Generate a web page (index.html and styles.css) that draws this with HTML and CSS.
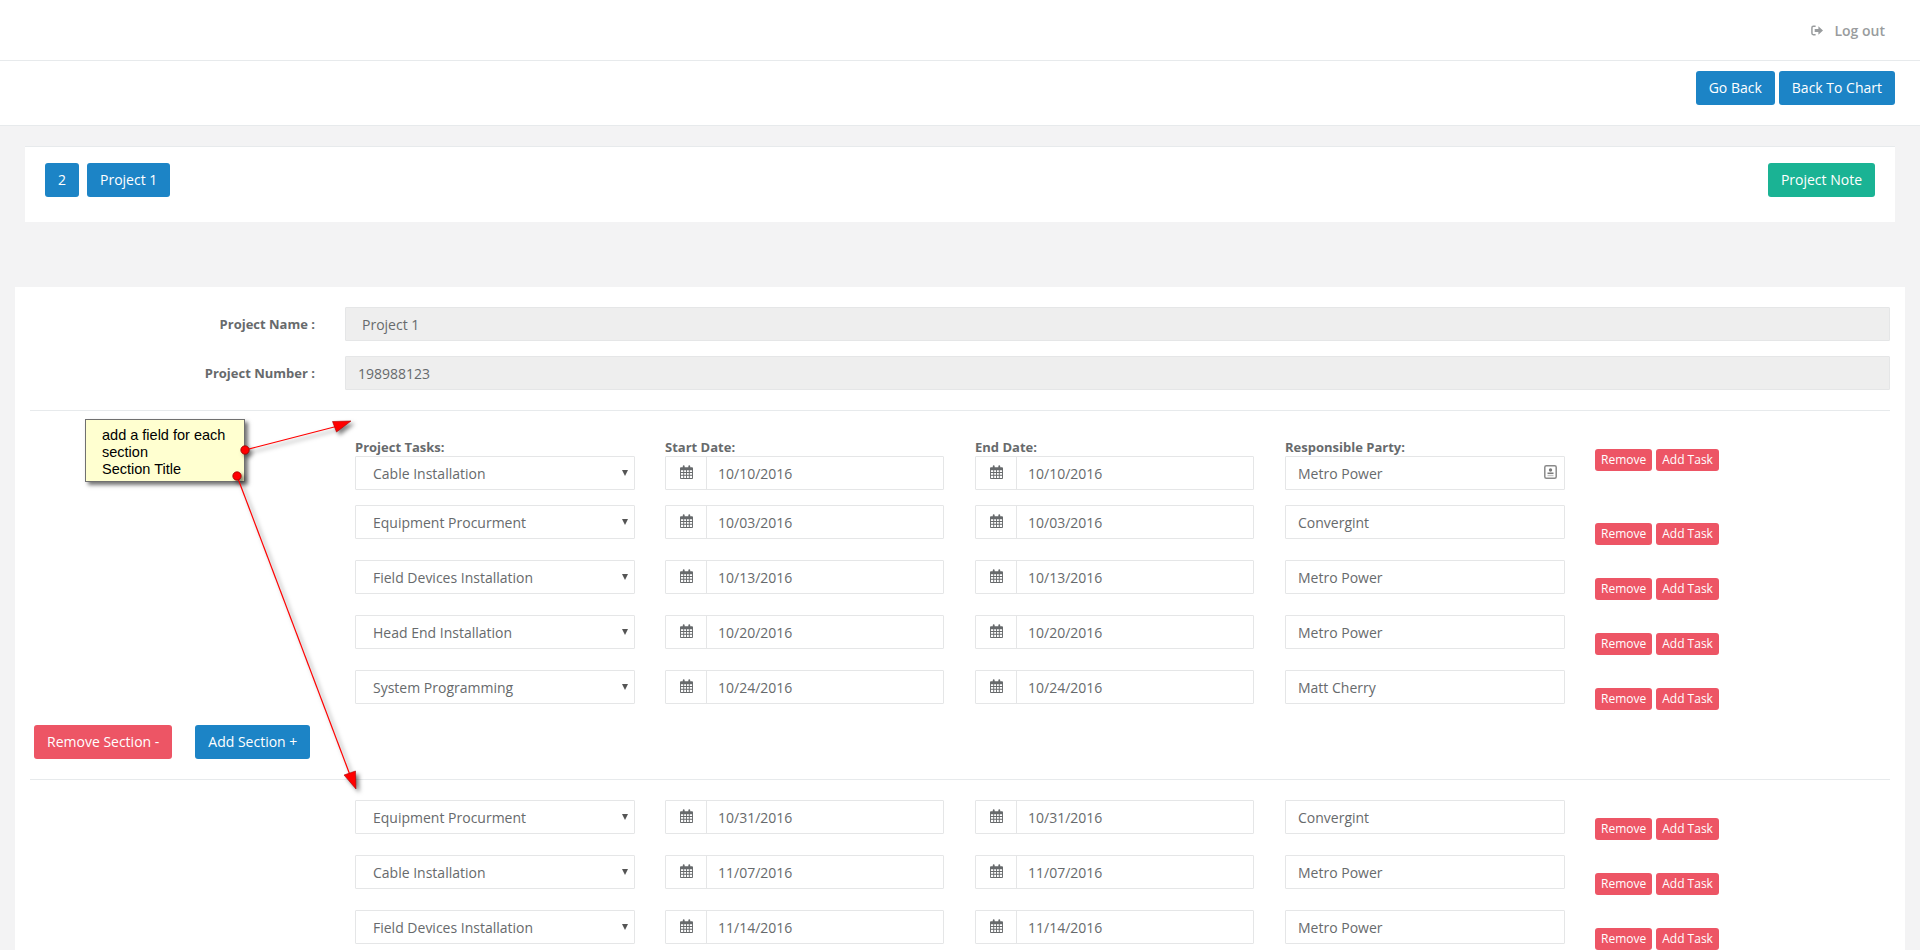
FILE: index.html
```html
<!DOCTYPE html>
<html lang="en">
<head>
<meta charset="utf-8">
<title>Project 1</title>
<link rel="stylesheet" href="styles.css">
</head>
<body>
<svg class="defs" aria-hidden="true">
  <symbol id="cal" viewBox="0 0 14 15">
    <path fill-rule="evenodd" d="M1 2.500h2V1.200a1 1 0 0 1 2 0v1.300h4V1.200a1 1 0 0 1 2 0v1.300h2a1 1 0 0 1 1 1V14a1 1 0 0 1-1 1H1a1 1 0 0 1-1-1V3.500a1 1 0 0 1 1-1zM1 5.500v2h2.500v-2zm3.500 0v2H6.500v-2zm3 0v2h2v-2zm3 0v2H13v-2zM1 8.500v2h2.500v-2zm3.500 0v2H6.500v-2zm3 0v2h2v-2zm3 0v2H13v-2zM1 11.500V14h2.500v-2.500zm3.500 0V14H6.500v-2.500zm3 0V14h2v-2.500zm3 0V14H13v-2.500z"/>
  </symbol>
</svg>
<div class="page">
  <nav class="topnav">
    <a class="logout" href="#">
      <svg class="logout-icon" viewBox="0 0 13 11"><path d="M5 1H2.500A1.500 1.500 0 0 0 1 2.500v6A1.500 1.500 0 0 0 2.500 10H5" fill="none" stroke="currentColor" stroke-width="1.600"/><path d="M4 3.800h4V1l5 4.500L8 10V7.200H4z" fill="currentColor"/></svg>
      Log out
    </a>
  </nav>
  <header class="actionbar">
    <button class="btn btn-blue">Go Back</button>
    <button class="btn btn-blue">Back To Chart</button>
  </header>
  <section class="card">
    <div class="card-left">
      <button class="btn btn-blue">2</button>
      <button class="btn btn-blue">Project 1</button>
    </div>
    <button class="btn btn-green">Project Note</button>
  </section>
  <main class="panel">
    <div class="form-row">
      <label class="form-label">Project Name :</label>
      <input class="input input-disabled input-select-pad" value="Project 1" disabled>
    </div>
    <div class="form-row">
      <label class="form-label">Project Number :</label>
      <input class="input input-disabled" value="198988123" disabled>
    </div>
    <hr class="rule rule-top">

    <div class="task-row task-row-first">
      <div class="cell"><label class="cell-label">Project Tasks:</label><span class="select-wrap"><select class="select"><option>Cable Installation</option></select></span></div>
      <div class="cell"><label class="cell-label">Start Date:</label><div class="date"><span class="addon"><svg class="cal"><use href="#cal"/></svg></span><input class="date-input" value="10/10/2016"></div></div>
      <div class="cell"><label class="cell-label">End Date:</label><div class="date"><span class="addon"><svg class="cal"><use href="#cal"/></svg></span><input class="date-input" value="10/10/2016"></div></div>
      <div class="cell"><label class="cell-label">Responsible Party:</label><div class="party"><input class="input" value="Metro Power">
        <svg class="contact" viewBox="0 0 13 14"><rect x=".8" y=".8" width="11.400" height="12.400" rx="1.500" fill="#fff" stroke="#8a8a8a" stroke-width="1.500"/><circle cx="6.500" cy="5" r="1.700" fill="#7a7a7a"/><path d="M3.500 7.500h6V9h-6z" fill="#7a7a7a"/><path d="M3.500 9.800h6v1.400h-6z" fill="#c4c4c4"/></svg></div></div>
      <div class="actions"><button class="btn-xs">Remove</button><button class="btn-xs">Add Task</button></div>
    </div>

    <div class="task-row">
      <div class="cell"><span class="select-wrap"><select class="select"><option>Equipment Procurment</option></select></span></div>
      <div class="cell"><div class="date"><span class="addon"><svg class="cal"><use href="#cal"/></svg></span><input class="date-input" value="10/03/2016"></div></div>
      <div class="cell"><div class="date"><span class="addon"><svg class="cal"><use href="#cal"/></svg></span><input class="date-input" value="10/03/2016"></div></div>
      <div class="cell"><input class="input" value="Convergint"></div>
      <div class="actions"><button class="btn-xs">Remove</button><button class="btn-xs">Add Task</button></div>
    </div>

    <div class="task-row">
      <div class="cell"><span class="select-wrap"><select class="select"><option>Field Devices Installation</option></select></span></div>
      <div class="cell"><div class="date"><span class="addon"><svg class="cal"><use href="#cal"/></svg></span><input class="date-input" value="10/13/2016"></div></div>
      <div class="cell"><div class="date"><span class="addon"><svg class="cal"><use href="#cal"/></svg></span><input class="date-input" value="10/13/2016"></div></div>
      <div class="cell"><input class="input" value="Metro Power"></div>
      <div class="actions"><button class="btn-xs">Remove</button><button class="btn-xs">Add Task</button></div>
    </div>

    <div class="task-row">
      <div class="cell"><span class="select-wrap"><select class="select"><option>Head End Installation</option></select></span></div>
      <div class="cell"><div class="date"><span class="addon"><svg class="cal"><use href="#cal"/></svg></span><input class="date-input" value="10/20/2016"></div></div>
      <div class="cell"><div class="date"><span class="addon"><svg class="cal"><use href="#cal"/></svg></span><input class="date-input" value="10/20/2016"></div></div>
      <div class="cell"><input class="input" value="Metro Power"></div>
      <div class="actions"><button class="btn-xs">Remove</button><button class="btn-xs">Add Task</button></div>
    </div>

    <div class="task-row">
      <div class="cell"><span class="select-wrap"><select class="select"><option>System Programming</option></select></span></div>
      <div class="cell"><div class="date"><span class="addon"><svg class="cal"><use href="#cal"/></svg></span><input class="date-input" value="10/24/2016"></div></div>
      <div class="cell"><div class="date"><span class="addon"><svg class="cal"><use href="#cal"/></svg></span><input class="date-input" value="10/24/2016"></div></div>
      <div class="cell"><input class="input" value="Matt Cherry"></div>
      <div class="actions"><button class="btn-xs">Remove</button><button class="btn-xs">Add Task</button></div>
    </div>

    <div class="section-actions">
      <button class="btn btn-red">Remove Section -</button>
      <button class="btn btn-blue">Add Section +</button>
    </div>
    <hr class="rule rule-section">

    <div class="task-row">
      <div class="cell"><span class="select-wrap"><select class="select"><option>Equipment Procurment</option></select></span></div>
      <div class="cell"><div class="date"><span class="addon"><svg class="cal"><use href="#cal"/></svg></span><input class="date-input" value="10/31/2016"></div></div>
      <div class="cell"><div class="date"><span class="addon"><svg class="cal"><use href="#cal"/></svg></span><input class="date-input" value="10/31/2016"></div></div>
      <div class="cell"><input class="input" value="Convergint"></div>
      <div class="actions"><button class="btn-xs">Remove</button><button class="btn-xs">Add Task</button></div>
    </div>

    <div class="task-row">
      <div class="cell"><span class="select-wrap"><select class="select"><option>Cable Installation</option></select></span></div>
      <div class="cell"><div class="date"><span class="addon"><svg class="cal"><use href="#cal"/></svg></span><input class="date-input" value="11/07/2016"></div></div>
      <div class="cell"><div class="date"><span class="addon"><svg class="cal"><use href="#cal"/></svg></span><input class="date-input" value="11/07/2016"></div></div>
      <div class="cell"><input class="input" value="Metro Power"></div>
      <div class="actions"><button class="btn-xs">Remove</button><button class="btn-xs">Add Task</button></div>
    </div>

    <div class="task-row">
      <div class="cell"><span class="select-wrap"><select class="select"><option>Field Devices Installation</option></select></span></div>
      <div class="cell"><div class="date"><span class="addon"><svg class="cal"><use href="#cal"/></svg></span><input class="date-input" value="11/14/2016"></div></div>
      <div class="cell"><div class="date"><span class="addon"><svg class="cal"><use href="#cal"/></svg></span><input class="date-input" value="11/14/2016"></div></div>
      <div class="cell"><input class="input" value="Metro Power"></div>
      <div class="actions"><button class="btn-xs">Remove</button><button class="btn-xs">Add Task</button></div>
    </div>
  </main>

  <div class="note">add a field for each section<br>Section Title</div>
  <svg class="annotation" viewBox="0 0 1920 950" aria-hidden="true">
    <g class="shadowed">
      <line x1="245" y1="450" x2="340" y2="425.500" stroke="#f00" stroke-width="1.200"/>
      <line x1="237" y1="476" x2="350" y2="775" stroke="#f00" stroke-width="1.200"/>
      <path d="M351 421L332.500 421.500 336.500 432z" fill="#f00" stroke="#a00" stroke-width=".6"/>
      <path d="M356 789L344 775 355.500 771z" fill="#f00" stroke="#a00" stroke-width=".6"/>
      <circle cx="245" cy="450" r="4.200" fill="#f00" stroke="#900" stroke-width=".8"/>
      <circle cx="237" cy="476" r="4.200" fill="#f00" stroke="#900" stroke-width=".8"/>
    </g>
  </svg>
</div>
</body>
</html>
```
FILE: styles.css
```css
* { box-sizing: border-box; }
html, body { margin: 0; height: 950px; overflow: hidden; }
body {
  background: #f3f3f4;
  color: #676a6c;
  font-family: "Open Sans", "Liberation Sans", sans-serif;
  font-size: 14px;
}
.defs { display: none; }
.page { position: relative; height: 950px; overflow: hidden; }

.topnav {
  height: 61px;
  background: #fff;
  border-bottom: 1px solid #e7eaec;
  display: flex;
  justify-content: flex-end;
  align-items: center;
  padding-right: 35px;
}
.logout {
  color: #999c9e;
  font-weight: 600;
  text-decoration: none;
  display: flex;
  align-items: center;
  gap: 11px;
}
.logout-icon { width: 12px; height: 11px; }

.actionbar {
  height: 65px;
  background: #fff;
  border-bottom: 1px solid #e7eaec;
  display: flex;
  justify-content: flex-end;
  gap: 4px;
  padding: 10px 25px 0 0;
}

.btn {
  height: 34px;
  padding: 0 13px;
  border: 0;
  border-radius: 3px;
  color: #fff;
  font: inherit;
  line-height: 34px;
}
.btn-blue { background: #1c84c6; }
.btn-green { background: #1ab394; }
.btn-red { background: #ed5565; }

.card {
  margin: 20px 25px 0;
  height: 76px;
  background: #fff;
  border-top: 1px solid #e7eaec;
  padding: 16px 20px;
  display: flex;
  justify-content: space-between;
  align-items: flex-start;
}
.card-left { display: flex; gap: 8px; }

.panel {
  margin: 65px 15px 0;
  background: #fff;
  padding: 20px 15px;
  height: 700px;
}
.form-row { display: flex; gap: 30px; align-items: center; margin-bottom: 15px; }
.form-label { flex: none; width: 285px; text-align: right; font-size: 13px; font-weight: 700; }

.input {
  display: block;
  width: 100%;
  height: 34px;
  padding: 0 12px;
  border: 1px solid #e5e6e7;
  border-radius: 1px;
  background: #fff;
  color: #676a6c;
  font: inherit;
  outline: 0;
}
.form-row .input { flex: 1; width: auto; min-width: 0; }
.input-disabled { background: #eee; opacity: 1; }
.input-select-pad { padding-left: 16px; }

.rule { border: 0; border-top: 1px solid #e7eaec; margin: 0; }
.rule-top { margin-top: 20px; margin-bottom: 27px; }
.rule-section { margin-top: 20px; margin-bottom: 20px; }

.task-row {
  display: grid;
  grid-template-columns: repeat(4, 280px) auto;
  column-gap: 30px;
  align-items: start;
  padding-left: 325px;
}
.task-row + .task-row { margin-top: 15px; }
.cell-label { display: block; height: 18px; line-height: 18px; font-size: 13px; font-weight: 700; }

.select-wrap { display: block; position: relative; }
.select-wrap::after {
  content: "";
  position: absolute;
  right: 7px;
  top: 14px;
  border-left: 3px solid transparent;
  border-right: 3px solid transparent;
  border-top: 6px solid #555;
}
.select {
  display: block;
  width: 100%;
  height: 34px;
  padding: 0 12px 0 17px;
  border: 1px solid #e5e6e7;
  border-radius: 1px;
  background: #fff;
  color: #676a6c;
  font: inherit;
  appearance: none;
  outline: 0;
}

.date { display: flex; width: 279px; height: 34px; border: 1px solid #e5e6e7; border-radius: 1px; }
.addon {
  width: 41px;
  flex: none;
  border-right: 1px solid #e5e6e7;
  display: flex;
  align-items: center;
  justify-content: center;
  padding-bottom: 2px;
}
.cal { width: 13px; height: 14px; fill: #676a6c; }
.date-input {
  flex: 1;
  min-width: 0;
  border: 0;
  padding: 0 11px;
  color: #676a6c;
  font: inherit;
  background: transparent;
  outline: 0;
}

.party { position: relative; }
.contact {
  position: absolute;
  right: 8px;
  top: 9px;
  width: 13px;
  height: 14px;
}

.actions { display: flex; gap: 4px; margin-top: 18px; }
.task-row-first .actions { margin-top: 11px; }
.btn-xs {
  height: 22px;
  padding: 0 6px;
  border: 0;
  border-radius: 3px;
  background: #ed5565;
  color: #fff;
  font: inherit;
  font-size: 12px;
  line-height: 22px;
}

.section-actions {
  display: flex;
  gap: 23px;
  padding-left: 4px;
  margin-top: 15px;
}

.note {
  position: absolute;
  left: 85px;
  top: 419px;
  width: 160px;
  height: 63px;
  padding: 7px 12px 0 16px;
  background: #ffffd0;
  border: 1px solid #707070;
  box-shadow: 3px 3px 4px rgba(0, 0, 0, .55);
  color: #000;
  font-family: "Liberation Sans", Arial, sans-serif;
  font-size: 14.500px;
  line-height: 17px;
}
.annotation {
  position: absolute;
  left: 0;
  top: 0;
  width: 1920px;
  height: 950px;
  pointer-events: none;
}
.shadowed { filter: drop-shadow(3px 3px 2px rgba(0, 0, 0, .5)); }
```
